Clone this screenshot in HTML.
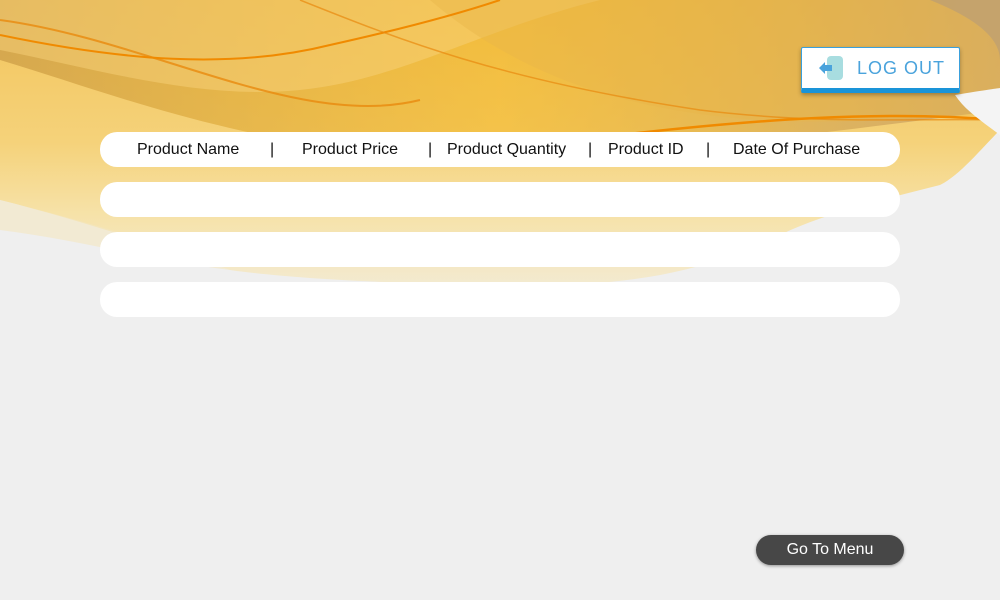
<!DOCTYPE html>
<html><head><meta charset="utf-8"><style>
body{margin:0;width:1000px;height:600px;background:#efefef;position:relative;overflow:hidden;font-family:"Liberation Sans",sans-serif}
svg.bg{position:absolute;left:0;top:0}
.row{position:absolute;left:100px;width:800px;height:35px;background:#fff;border-radius:17px}
.hdr span{position:absolute;top:9px;font-size:16px;color:#111;white-space:nowrap}
.logout{position:absolute;left:801px;top:47px;width:157px;height:40px;background:#fff;border:1px solid #3aa0dc;border-bottom:5px solid #1a94d8;border-radius:2px;box-shadow:0 2px 4px rgba(0,0,0,.3)}
.logout .t{position:absolute;left:55px;top:10px;font-size:18px;color:#4aa3dc;letter-spacing:1px}
.go{position:absolute;left:756px;top:535px;width:148px;height:30px;background:#474747;border-radius:15px;color:#fff;font-size:16px;text-align:center;line-height:30px;box-shadow:0 1px 3px rgba(0,0,0,.4)}
</style></head><body>
<svg class="bg" width="1000" height="600" viewBox="0 0 1000 600">
<defs>
<linearGradient id="fade" x1="0" y1="0" x2="0" y2="1"><stop offset="0" stop-color="#f2c45a"/><stop offset=".5" stop-color="#f5d27a"/><stop offset=".75" stop-color="#f6e2a8"/><stop offset="1" stop-color="#f3ead0"/></linearGradient>
<linearGradient id="br" x1="0" y1="0" x2="1" y2="0"><stop offset="0" stop-color="#c99a45" stop-opacity=".7"/><stop offset=".5" stop-color="#f3b41c" stop-opacity=".5"/><stop offset="1" stop-color="#c4a070" stop-opacity=".8"/></linearGradient>
</defs>
<path d="M0 0H1000V130C980 150 960 175 940 185C880 200 820 215 780 235C700 275 620 285 540 285C420 285 300 280 230 270C170 250 80 220 0 200Z" fill="url(#fade)"/>
<path d="M0 200C80 220 150 240 200 260L230 270C150 260 80 240 0 230Z" fill="#f3e6c0" opacity=".6"/>
<path d="M0 60C100 90 200 130 350 150C500 170 700 150 1000 110V0H0Z" fill="url(#br)"/>
<path d="M0 0H600C480 30 400 80 300 90C200 100 100 70 0 50Z" fill="#f7d27a" opacity=".5"/>
<path d="M430 0C500 60 600 110 760 120C860 125 940 115 1000 115V0Z" fill="#e9b64a" opacity=".45"/>
<path d="M0 20C150 40 300 130 420 100" stroke="#e8890e" stroke-width="2" fill="none" opacity=".8"/>
<path d="M0 35C120 60 230 70 330 45C420 25 470 10 500 0" stroke="#f08a00" stroke-width="2" fill="none"/>
<path d="M300 0C400 40 500 80 700 110C820 125 920 118 1000 120" stroke="#e8890e" stroke-width="1.5" fill="none" opacity=".7"/>
<path d="M620 135C750 120 880 110 1000 120" stroke="#f08a00" stroke-width="2.5" fill="none"/>
<path d="M930 0C980 20 1000 40 1000 60V0Z" fill="#bfa070" opacity=".8"/>
<path d="M955 95C985 90 1000 88 1000 88V135C980 120 965 110 955 95Z" fill="#f4f4f4"/>
</svg>
<div class="row hdr" style="top:132px">
<span style="left:37px">Product Name</span><span style="left:170px">|</span>
<span style="left:202px">Product Price</span><span style="left:328px">|</span>
<span style="left:347px">Product Quantity</span><span style="left:488px">|</span>
<span style="left:508px">Product ID</span><span style="left:606px">|</span>
<span style="left:633px">Date Of Purchase</span>
</div>
<div class="row" style="top:182px"></div>
<div class="row" style="top:232px"></div>
<div class="row" style="top:282px"></div>
<div class="logout">
<div style="position:absolute;left:25px;top:8px;width:16px;height:24px;background:#a8dde0;border-radius:4px"></div>
<svg style="position:absolute;left:16px;top:13px" width="16" height="14"><path d="M1 7L7 1V4H14V10H7V13Z" fill="#4aa3dc"/></svg>
<div class="t">LOG OUT</div>
</div>
<div class="go">Go To Menu</div>
</body></html>
